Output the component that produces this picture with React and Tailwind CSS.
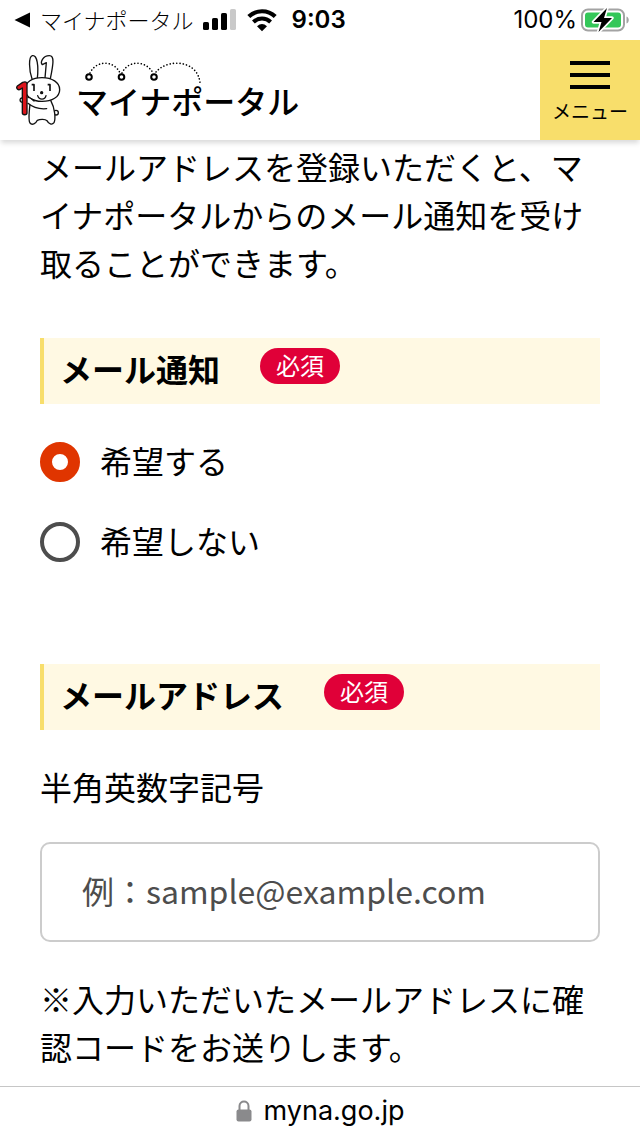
import React, { useState } from 'react';

const notifyOptions = [
  { value: 'yes', label: '希望する' },
  { value: 'no', label: '希望しない' },
];

const SignalIcon = () => (
  <svg className="h-6 w-9" viewBox="0 0 36 24" aria-hidden="true">
    <rect x="1" y="14" width="6" height="8" rx="1.6" />
    <rect x="10" y="10" width="6" height="12" rx="1.6" />
    <rect x="19" y="5" width="6" height="17" rx="1.6" />
    <rect x="28" y="1" width="6" height="21" rx="1.6" fill="#c9c9c9" />
  </svg>
);

const WifiIcon = () => (
  <svg className="h-6 w-8" viewBox="0 0 32 24" fill="none" stroke="#000" aria-hidden="true">
    <path d="M2.8 8.6A19 19 0 0 1 29.2 8.6" strokeWidth="4.2" />
    <path d="M7.4 14A12.400 12.400 0 0 1 24.600 14" strokeWidth="4" />
    <path d="M11 18.200Q16 14 21 18.200L16 23.200Z" fill="#000" stroke="none" />
  </svg>
);

const BatteryIcon = () => (
  <svg className="h-6 w-12" viewBox="0 0 48 24" aria-hidden="true">
    <rect x="1" y="1.5" width="42" height="21" rx="6" fill="none" stroke="#a3a3a3" strokeWidth="2" />
    <rect x="4" y="4.5" width="36" height="15" rx="3" fill="#34c759" />
    <path d="M45.5 8.5C48.5 9.5 48.5 14.5 45.5 15.5Z" fill="#a3a3a3" />
    <path
      d="M26 0L12.5 14H20.5L17.5 24L31 10H23Z"
      stroke="#fff"
      strokeWidth="3.4"
      strokeLinejoin="round"
      paintOrder="stroke"
    />
  </svg>
);

const Rabbit = () => (
  <svg
    className="h-20 w-15 shrink-0"
    viewBox="0 0 180 240"
    fill="#fff"
    stroke="#111"
    strokeWidth="4"
    strokeLinecap="round"
    strokeLinejoin="round"
    aria-hidden="true"
  >
    {/* ears, the right one folded at the tip */}
    <path d="M66 86C57 62 55 20 67 17C82 13 86 50 82 84" />
    <path d="M105 84L109 38L97 44C90 38 98 17 118 17C134 17 130 42 121 86" />
    {/* tail and body */}
    <circle cx="138" cy="188" r="7" />
    <path d="M62 148C58 176 54 210 60 219C66 227 78 220 82 211C90 207 106 207 111 212C116 222 126 226 132 218C137 208 136 176 122 151Z" />
    {/* head */}
    <path d="M96 83C126 83 149 97 149 119C149 141 126 154 96 154C66 154 46 140 46 118C46 96 66 83 96 83Z" />
    <path d="M65 104H72V123M113 104H120V123" fill="none" strokeWidth="5" strokeLinecap="butt" />
    <circle cx="95" cy="128" r="3" fill="#111" />
    <path d="M83 137C87 151 105 151 108 137" fill="none" />
    {/* the red "1" and the arm that holds it */}
    <path d="M36 144C28 144 28 157 38 157" />
    <path d="M110 176C88 178 68 172 54 160L44 154L50 142C60 141 63 148 69 153" stroke="none" />
    <path d="M110 176C88 178 68 172 54 160M54 142C62 142 66 148 72 153" fill="none" />
    <path
      d="M22 108L38 97Q51 93 51 103V189C51 196 37 196 37 189V114L29 119C22 121 17 113 22 108Z"
      fill="#dc141b"
    />
  </svg>
);

const Logo = () => (
  <a href="#top" className="flex items-center pl-[10px]">
    <Rabbit />
    <span className="flex flex-col pb-1 pl-[6px]">
      <svg className="h-8 w-32" viewBox="0 0 128 32" fill="none" stroke="#000" aria-hidden="true">
        <g strokeWidth="1.6" strokeLinecap="round" strokeDasharray="0.1 3.2">
          <path d="M14 13C20 0 38 0 44 13" />
          <path d="M46 13C52 0 70 0 77 13" />
          <path d="M80 12C92 -2 122 0 124 23" />
        </g>
        <g strokeWidth="2">
          <circle cx="13" cy="17" r="2.8" />
          <circle cx="45.5" cy="17" r="2.8" />
          <circle cx="78" cy="17" r="2.8" />
        </g>
      </svg>
      <span className="-mt-2 text-[32px] leading-8 font-medium">マイナポータル</span>
    </span>
  </a>
);

const StatusBar = () => (
  <div className="flex h-10 items-center justify-between pr-[11px] pl-[14px]">
    <div className="flex items-center">
      <a href="#back" className="flex items-center gap-[10px] text-[22px] leading-8 font-light">
        <svg className="h-4 w-4" viewBox="0 0 16 16" aria-hidden="true">
          <path d="M0.5 8L16 0.5V15.5Z" />
        </svg>
        <span className="pb-[2px]">マイナポータル</span>
      </a>
      <div className="flex items-center gap-2 pl-2">
        <SignalIcon />
        <WifiIcon />
      </div>
      <time className="pl-[14px] font-[Inter,sans-serif] text-2xl font-semibold">9:03</time>
    </div>
    <div className="flex items-center gap-1">
      <span className="font-[Inter,sans-serif] text-2xl">100%</span>
      <BatteryIcon />
    </div>
  </div>
);

const SectionHeading = ({ id, children }) => (
  <h2
    id={id}
    className="flex min-h-[66px] items-start gap-10 border-l-4 border-[#f8de6b] bg-[#fff9e3] pt-[6px] pl-4 text-[32px] leading-12 font-bold"
  >
    {children}
    <span className="mt-1 flex h-9 w-20 items-center justify-center rounded-full bg-[#e00038] pb-[2px] text-2xl font-normal text-white">
      必須
    </span>
  </h2>
);

const App = () => {
  const [notify, setNotify] = useState('yes');
  const [email, setEmail] = useState('');

  return (
    <div
      id="top"
      className="flex min-h-screen flex-col bg-white font-['Noto_Sans_CJK_JP',sans-serif] text-black"
    >
      <StatusBar />

      <header className="flex h-25 items-stretch justify-between shadow-[0_4px_5px_-1px_rgba(0,0,0,0.15)]">
        <Logo />
        <button
          type="button"
          className="flex w-25 flex-col items-center bg-[#f8de6b] pt-[21px] text-[19px] leading-6"
        >
          <span className="flex w-10 flex-col gap-2" aria-hidden="true">
            <span className="h-1 bg-black" />
            <span className="h-1 bg-black" />
            <span className="h-1 bg-black" />
          </span>
          <span className="pt-[10px]">メニュー</span>
        </button>
      </header>

      <main className="flex-1 px-10 pt-[2px] pb-4 text-[32px] leading-12">
        <p>メールアドレスを登録いただくと、マイナポータルからのメール通知を受け取ることができます。</p>

        <section className="pt-[52px]">
          <SectionHeading id="notify-heading">メール通知</SectionHeading>
          <div role="radiogroup" aria-labelledby="notify-heading" className="flex flex-col gap-7 pt-8">
            {notifyOptions.map((option) => (
              <label key={option.value} className="flex items-center gap-5">
                <input
                  type="radio"
                  name="notify"
                  value={option.value}
                  checked={notify === option.value}
                  onChange={() => setNotify(option.value)}
                  className="size-10 shrink-0 appearance-none rounded-full border-4 border-[#4d4d4d] bg-white checked:border-12 checked:border-[#e03500]"
                />
                <span className="pb-1">{option.label}</span>
              </label>
            ))}
          </div>
        </section>

        <section className="pt-24">
          <SectionHeading id="email-heading">メールアドレス</SectionHeading>
          <label htmlFor="email" className="block pt-8">
            半角英数字記号
          </label>
          <input
            id="email"
            type="email"
            value={email}
            onChange={(e) => setEmail(e.target.value)}
            placeholder="例：sample@example.com"
            className="mt-8 block h-25 w-full rounded-[10px] border-2 border-[#cccccc] px-10 pb-1 placeholder:text-[#4d4d4d]"
          />
          <p className="pt-8">※入力いただいたメールアドレスに確認コードをお送りします。</p>
        </section>
      </main>

      <footer className="flex h-[50px] items-center justify-center gap-3 border-t border-[#c6c6c6] font-[Inter,sans-serif] text-[27px]">
        <svg className="h-6 w-4" viewBox="0 0 16 24" aria-hidden="true">
          <path d="M3.5 12V6C3.5 0 12.5 0 12.5 6V12" fill="none" stroke="#8a8a8c" strokeWidth="2" />
          <rect x="0.5" y="9.5" width="15" height="12" rx="2" fill="#8a8a8c" />
        </svg>
        myna.go.jp
      </footer>
    </div>
  );
};

export default App;
